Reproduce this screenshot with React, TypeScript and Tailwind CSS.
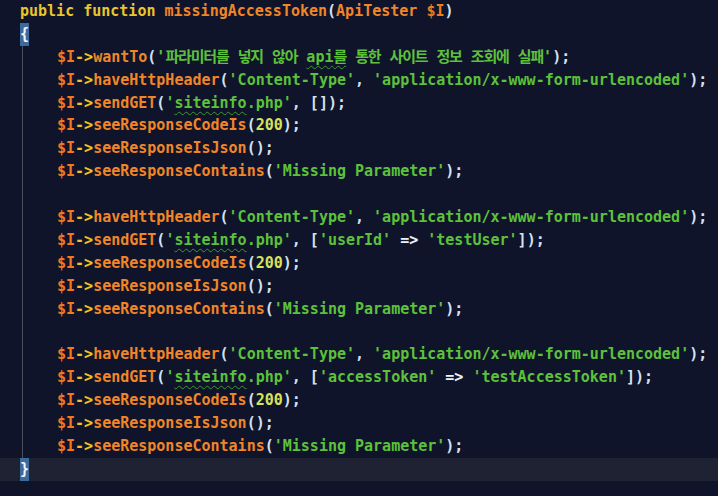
import type { ReactNode } from "react";

const kw = "text-[#e9c62b]";
const vr = "text-[#f07a1d]";
const ar = "text-[#f3c21c]";
const fn = "text-[#f08628]";
const st = "text-[#5cc23a]";
const pn = "text-[#d3e2f2]";
const nm = "text-[#d8e35a]";

function Squiggle({ children }: { children: ReactNode }) {
  return (
    <span className="underline decoration-wavy decoration-[#3e9a32] decoration-1 underline-offset-[3px]">
      {children}
    </span>
  );
}

// hangul runs a bit narrower than the CJK font's full width
function Ko({ children }: { children: ReactNode }) {
  return <span className="tracking-[-1.15px]">{children}</span>;
}

function Call({ name, children }: { name: string; children?: ReactNode }) {
  return (
    <>
      <span className={vr}>$I</span>
      <span className={ar}>-&gt;</span>
      <span className={fn}>{name}</span>
      <span className={pn}>(</span>
      {children}
      <span className={pn}>);</span>
    </>
  );
}

function Line({ children }: { children?: ReactNode }) {
  return <div className="h-[22.9px] whitespace-pre">{children}</div>;
}

function Str({ children }: { children: ReactNode }) {
  return <span className={st}>{children}</span>;
}

function Block({ second }: { second: ReactNode }) {
  return (
    <>
      <Line>
        <Call name="haveHttpHeader">
          <Str>'Content-Type'</Str>
          <span className={pn}>, </span>
          <Str>'application/x-www-form-urlencoded'</Str>
        </Call>
      </Line>
      <Line>
        <Call name="sendGET">
          <Str>
            '<Squiggle>siteinfo</Squiggle>.php'
          </Str>
          <span className={pn}>, [</span>
          {second}
          <span className={pn}>]</span>
        </Call>
      </Line>
      <Line>
        <Call name="seeResponseCodeIs">
          <span className={nm}>200</span>
        </Call>
      </Line>
      <Line>
        <Call name="seeResponseIsJson" />
      </Line>
      <Line>
        <Call name="seeResponseContains">
          <Str>'Missing Parameter'</Str>
        </Call>
      </Line>
    </>
  );
}

export default function App() {
  return (
    <div className="h-[496px] w-[718px] overflow-hidden bg-[#10142a] font-['DejaVu_Sans_Mono','Noto_Sans_CJK_KR',monospace] text-[15px] font-bold leading-[22.9px] text-[#d3e2f2]">
      <div className="pl-[20px]">
        <Line>
          <span className={kw}>public function </span>
          <span className={fn}>missingAccessToken</span>
          <span className={pn}>(</span>
          <span className={fn}>ApiTester </span>
          <span className={vr}>$I</span>
          <span className={pn}>)</span>
        </Line>
        <Line>
          <span className="inline-block h-[22.9px] bg-[#3b6b9c] text-[#f2f6fb]">{"{"}</span>
        </Line>
      </div>
      <div className="ml-[22px] border-l border-[#4a4f5e] pl-[34px]">
        <Line>
          <Call name="wantTo">
            <Str>
              '<Ko>파라미터를</Ko> <Ko>넣지</Ko> <Ko>않아</Ko> <Squiggle>api<Ko>를</Ko></Squiggle> <Ko>통한</Ko>{" "}
              <Ko>사이트</Ko> <Ko>정보</Ko> <Ko>조회에</Ko> <Ko>실패</Ko>'
            </Str>
          </Call>
        </Line>
        <Block second={null} />
        <Line />
        <Block
          second={
            <>
              <Str>'userId'</Str>
              <span className="text-[#eef2f8]"> =&gt; </span>
              <Str>'testUser'</Str>
            </>
          }
        />
        <Line />
        <Block
          second={
            <>
              <Str>'accessToken'</Str>
              <span className="text-[#eef2f8]"> =&gt; </span>
              <Str>'testAccessToken'</Str>
            </>
          }
        />
      </div>
      <div className="bg-[#1e2232] pl-[20px]">
        <Line>
          <span className="inline-block h-[22.9px] bg-[#3b6b9c] text-[#f2f6fb]">{"}"}</span>
        </Line>
      </div>
    </div>
  );
}
